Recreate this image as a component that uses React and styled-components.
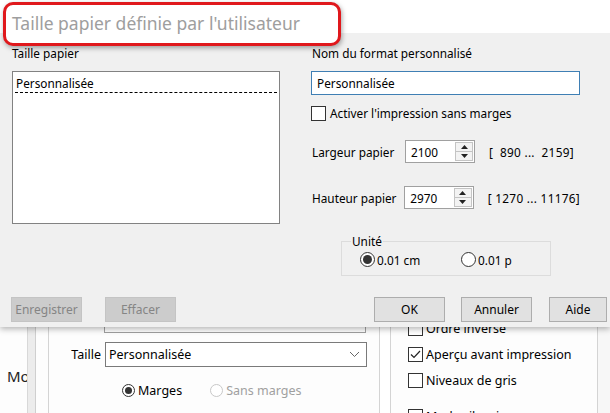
import React from 'react';
import styled, { createGlobalStyle } from 'styled-components';

const Global = createGlobalStyle`
  html, body { margin: 0; padding: 0; }
  body { font-family: "Noto Sans", "Open Sans", sans-serif; font-size: 11.8px; color: #000; }
`;

const Desktop = styled.div`
  position: relative;
  width: 610px;
  height: 413px;
  overflow: hidden;
  background: #fdfdfd;
`;

/* ---------- background print window ---------- */

const BackWindow = styled.div`
  display: flex;
  height: 100%;
`;

const SideStrip = styled.div`
  width: 27px;
  overflow: hidden;
  padding-top: 366px;
  box-sizing: border-box;
  font-size: 15px;
  color: #222;
  text-indent: 7px;
  white-space: nowrap;
`;

const Band = styled.div`
  width: ${p => p.w}px;
  background: ${p => p.bg};
  border-left: 1px solid ${p => p.line};
  box-sizing: border-box;
`;

const MainPanel = styled.div`
  width: 331px;
  padding-top: 309px;
  box-sizing: border-box;
  border-left: 1px solid #d4d4d4;
  display: flex;
  flex-direction: column;
`;

const HiddenField = styled.div`
  margin-left: 55px;
  width: 262px;
  height: 24px;
  border: 1px solid #a0a0a0;
  box-sizing: border-box;
  background: #fff;
`;

const SizeRow = styled.div`
  display: flex;
  align-items: center;
  margin-top: 9px;
  gap: 4px;
`;

const SizeLabel = styled.span`
  width: 52px;
  text-align: right;
  font-size: 12.5px;
`;

const Combo = styled.div`
  width: 262px;
  height: 25px;
  border: 1px solid #7a7a7a;
  box-sizing: border-box;
  background: #fff;
  display: flex;
  align-items: center;
  justify-content: space-between;
  padding: 0 6px 0 3px;
  font-size: 12.5px;
`;

const RadioRow = styled.div`
  display: flex;
  align-items: center;
  margin-top: 15px;
  padding-left: 73px;
  gap: 28px;
`;

const RadioItem = styled.label`
  display: flex;
  align-items: center;
  gap: 3px;
  font-size: 12.5px;
  color: ${p => (p.disabled ? '#a0a0a0' : '#000')};
`;

const Radio = styled.span`
  width: 13px;
  height: 13px;
  border-radius: 50%;
  box-sizing: border-box;
  border: 1px solid ${p => (p.disabled ? '#c8c8c8' : '#333')};
  background: #fff;
  display: flex;
  align-items: center;
  justify-content: center;
  flex: none;
  &::after {
    content: '';
    display: ${p => (p.checked ? 'block' : 'none')};
    width: 7px;
    height: 7px;
    border-radius: 50%;
    background: #333;
  }
`;

const Gap = styled.div`
  width: 11px;
  border-left: 1px solid #d4d4d4;
  box-sizing: border-box;
  background: #fff;
`;

const OptionsPanel = styled.div`
  width: 207px;
  border-left: 1px solid #d4d4d4;
  box-sizing: border-box;
  padding: 320px 0 0 17px;
  display: flex;
  flex-direction: column;
  gap: 10px;
`;

const CheckRow = styled.label`
  display: flex;
  align-items: center;
  gap: 3px;
  font-size: 12.5px;
  height: 16px;
`;

const Box = styled.span`
  width: 15px;
  height: 15px;
  border: 1px solid #333;
  box-sizing: border-box;
  background: #fff;
  display: flex;
  align-items: center;
  justify-content: center;
  flex: none;
`;

const Separator = styled.div`
  height: 1px;
  width: 187px;
  margin-left: -10px;
  background: #a0a0a0;
`;

const EdgeStrip = styled.div`
  flex: 1;
  border-left: 1px solid #d4d4d4;
  background: #f7f7f7;
`;

/* ---------- foreground dialog ---------- */

const Dialog = styled.div`
  position: absolute;
  top: 0;
  left: 0;
  width: 610px;
  height: 327px;
  background: #f0f0f0;
  box-shadow: 0 2px 6px rgba(0, 0, 0, 0.3);
  display: flex;
  flex-direction: column;
`;

const TitleBar = styled.div`
  height: 33px;
  background: #fff;
  flex: none;
`;

const Callout = styled.div`
  position: absolute;
  top: 2px;
  left: 3px;
  width: 338px;
  height: 44px;
  box-sizing: border-box;
  border: 3px solid #e0181c;
  border-radius: 10px;
  background: #fff;
  box-shadow: 1px 2px 5px rgba(0, 0, 0, 0.35);
  padding: 6px 0 0 6px;
  font-size: 17.5px;
  color: #9e9e9e;
  white-space: nowrap;
`;

const Body = styled.div`
  display: grid;
  grid-template-columns: 268px 269px;
  column-gap: 31px;
  padding: 12px 0 0 12px;
`;

const Column = styled.div`
  display: flex;
  flex-direction: column;
`;

const Caption = styled.div`
  height: 16px;
  line-height: 16px;
  padding-left: ${p => p.indent || 0}px;
  margin-bottom: 10px;
`;

const ListBox = styled.div`
  height: 153px;
  border: 1px solid #828282;
  box-sizing: border-box;
  background: #fff;
  padding: 2px 2px 0 2px;
`;

const ListItem = styled.div`
  height: 18px;
  line-height: 18px;
  padding-left: 1px;
  border-bottom: 1px dashed #000;
`;

const TextInput = styled.div`
  height: 24px;
  border: 1px solid #3f7fb4;
  box-sizing: border-box;
  background: #fff;
  padding-left: 5px;
  line-height: 22px;
`;

const CheckLine = styled.label`
  display: flex;
  align-items: center;
  gap: 4px;
  margin-top: 10px;
  height: 16px;
`;

const FieldRow = styled.div`
  display: flex;
  align-items: center;
  margin-top: ${p => p.top}px;
  padding-left: 1px;
`;

const FieldLabel = styled.span`
  width: 93px;
`;

const Spinner = styled.div`
  width: 70px;
  height: 23px;
  border: 1px solid #a0a0a0;
  box-sizing: border-box;
  background: #fff;
  display: flex;
  align-items: center;
  justify-content: space-between;
  padding: 1px 1px 1px 5px;
`;

const SpinButtons = styled.div`
  width: 18px;
  height: 19px;
  display: flex;
  flex-direction: column;
  border: 1px solid #c4c4c4;
  box-sizing: border-box;
  background: #f3f3f3;
  & > span {
    flex: 1;
    display: flex;
    align-items: center;
    justify-content: center;
  }
  & > span + span {
    border-top: 1px solid #c4c4c4;
  }
`;

const Range = styled.span`
  margin-left: 14px;
  white-space: pre;
  letter-spacing: 0.3px;
`;

const GroupBox = styled.fieldset`
  margin: 25px 0 0 30px;
  width: 210px;
  box-sizing: border-box;
  border: 1px solid #dcdcdc;
  padding: 0 0 8px 18px;
  & > legend {
    padding: 0 1px;
    margin-left: -9px;
    height: 14px;
    line-height: 14px;
  }
`;

const UnitRow = styled.div`
  display: flex;
  align-items: center;
  margin-top: 4px;
  height: 15px;
`;

const UnitOption = styled.label`
  display: flex;
  align-items: center;
  gap: 2px;
  width: ${p => p.w || 'auto'};
`;

const BigRadio = styled(Radio)`
  width: 15px;
  height: 15px;
  &::after {
    width: 9px;
    height: 9px;
  }
`;

const ButtonBar = styled.div`
  display: flex;
  align-items: center;
  margin-top: 21px;
  padding-left: 11px;
`;

const Button = styled.button`
  width: ${p => p.w || 71}px;
  height: 25px;
  margin-left: ${p => p.ml || 0}px;
  font-family: inherit;
  font-size: 12px;
  padding: 0;
  border: 1px solid ${p => (p.disabled ? '#c4c4c4' : '#adadad')};
  background: ${p => (p.disabled ? '#cccccc' : '#e1e1e1')};
  color: ${p => (p.disabled ? '#858585' : '#000')};
`;

const Check = () => (
  <svg width="11" height="9" viewBox="0 0 11 9">
    <polyline points="1,4.5 4,7.5 10,1" fill="none" stroke="#222" strokeWidth="1.2" />
  </svg>
);

const Arrow = ({ up }) => (
  <svg width="7" height="4" viewBox="0 0 7 4">
    <polygon points={up ? '0,4 3.5,0 7,4' : '0,0 3.5,4 7,0'} fill="#222" />
  </svg>
);

const Chevron = () => (
  <svg width="11" height="7" viewBox="0 0 11 7">
    <polyline points="1,1 5.5,5.5 10,1" fill="none" stroke="#666" strokeWidth="1" />
  </svg>
);

const NumberField = ({ label, value, range, top }) => (
  <FieldRow top={top}>
    <FieldLabel>{label}</FieldLabel>
    <Spinner>
      <span>{value}</span>
      <SpinButtons>
        <span><Arrow up /></span>
        <span><Arrow /></span>
      </SpinButtons>
    </Spinner>
    <Range>{range}</Range>
  </FieldRow>
);

export default function App() {
  return (
    <Desktop>
      <Global />
      <BackWindow>
        <SideStrip>Mode</SideStrip>
        <Band w={8} bg="#ececec" line="#d8d8d8" />
        <Band w={13} bg="#fdfdfd" line="#cfcfcf" />
        <MainPanel>
          <HiddenField />
          <SizeRow>
            <SizeLabel>Taille</SizeLabel>
            <Combo>
              <span>Personnalisée</span>
              <Chevron />
            </Combo>
          </SizeRow>
          <RadioRow>
            <RadioItem><Radio checked />Marges</RadioItem>
            <RadioItem disabled><Radio disabled />Sans marges</RadioItem>
          </RadioRow>
        </MainPanel>
        <Gap />
        <OptionsPanel>
          <CheckRow><Box />Ordre inversé</CheckRow>
          <CheckRow><Box><Check /></Box>Aperçu avant impression</CheckRow>
          <CheckRow><Box />Niveaux de gris</CheckRow>
          <Separator />
          <CheckRow><Box />Mode silencieux</CheckRow>
        </OptionsPanel>
        <EdgeStrip />
      </BackWindow>

      <Dialog>
        <TitleBar />
        <Body>
          <Column>
            <Caption>Taille papier</Caption>
            <ListBox>
              <ListItem>Personnalisée</ListItem>
            </ListBox>
          </Column>
          <Column>
            <Caption indent={1}>Nom du format personnalisé</Caption>
            <TextInput>Personnalisée</TextInput>
            <CheckLine><Box />Activer l'impression sans marges</CheckLine>
            <NumberField label="Largeur papier" value="2100" range="[  890 ...  2159]" top={19} />
            <NumberField label="Hauteur papier" value="2970" range="[ 1270 ... 11176]" top={23} />
            <GroupBox>
              <legend>Unité</legend>
              <UnitRow>
                <UnitOption w="101px"><BigRadio checked />0.01 cm</UnitOption>
                <UnitOption><BigRadio />0.01 p</UnitOption>
              </UnitRow>
            </GroupBox>
          </Column>
        </Body>
        <ButtonBar>
          <Button disabled>Enregistrer</Button>
          <Button disabled ml={23}>Effacer</Button>
          <Button ml={198}>OK</Button>
          <Button ml={16}>Annuler</Button>
          <Button ml={17} w={58}>Aide</Button>
        </ButtonBar>
        <Callout>Taille papier définie par l'utilisateur</Callout>
      </Dialog>
    </Desktop>
  );
}
